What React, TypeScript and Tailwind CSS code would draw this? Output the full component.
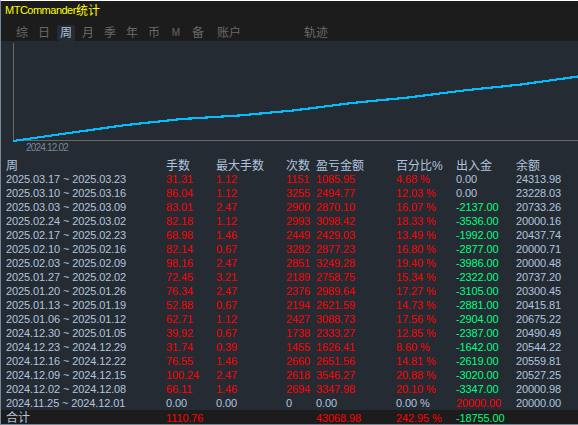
import React, { useState } from 'react';
import clsx from 'clsx';

type Week = [range: string, lots: string, maxLot: string, count: string, profit: string, percent: string, flow: string, balance: string];

const TABS = ['综', '日', '周', '月', '季', '年', '币', 'M', '备'];

const HEADERS = ['周', '手数', '最大手数', '次数', '盈亏金额', '百分比%', '出入金', '余额'];

const WEEKS: Week[] = [
    ['2025.03.17 ~ 2025.03.23', '31.31', '1.12', '1151', '1085.95', '4.68 %', '0.00', '24313.98'],
    ['2025.03.10 ~ 2025.03.16', '86.04', '1.12', '3255', '2494.77', '12.03 %', '0.00', '23228.03'],
    ['2025.03.03 ~ 2025.03.09', '83.01', '2.47', '2900', '2870.10', '16.07 %', '-2137.00', '20733.26'],
    ['2025.02.24 ~ 2025.03.02', '82.18', '1.12', '2993', '3098.42', '18.33 %', '-3536.00', '20000.16'],
    ['2025.02.17 ~ 2025.02.23', '68.98', '1.46', '2449', '2429.03', '13.49 %', '-1992.00', '20437.74'],
    ['2025.02.10 ~ 2025.02.16', '82.14', '0.67', '3282', '2877.23', '16.80 %', '-2877.00', '20000.71'],
    ['2025.02.03 ~ 2025.02.09', '98.16', '2.47', '2851', '3249.28', '19.40 %', '-3986.00', '20000.48'],
    ['2025.01.27 ~ 2025.02.02', '72.45', '3.21', '2189', '2758.75', '15.34 %', '-2322.00', '20737.20'],
    ['2025.01.20 ~ 2025.01.26', '76.34', '2.47', '2376', '2989.64', '17.27 %', '-3105.00', '20300.45'],
    ['2025.01.13 ~ 2025.01.19', '52.88', '0.67', '2194', '2621.59', '14.73 %', '-2881.00', '20415.81'],
    ['2025.01.06 ~ 2025.01.12', '62.71', '1.12', '2427', '3088.73', '17.56 %', '-2904.00', '20675.22'],
    ['2024.12.30 ~ 2025.01.05', '39.92', '0.67', '1738', '2333.27', '12.85 %', '-2387.00', '20490.49'],
    ['2024.12.23 ~ 2024.12.29', '31.74', '0.39', '1455', '1626.41', '8.60 %', '-1642.00', '20544.22'],
    ['2024.12.16 ~ 2024.12.22', '76.55', '1.46', '2660', '2651.56', '14.81 %', '-2619.00', '20559.81'],
    ['2024.12.09 ~ 2024.12.15', '100.24', '2.47', '2618', '3546.27', '20.88 %', '-3020.00', '20527.25'],
    ['2024.12.02 ~ 2024.12.08', '66.11', '1.46', '2694', '3347.98', '20.10 %', '-3347.00', '20000.98'],
    ['2024.11.25 ~ 2024.12.01', '0.00', '0.00', '0', '0.00', '0.00 %', '20000.00', '20000.00'],
];

const TOTAL = ['合计', '1110.76', '', '', '43068.98', '242.95 %', '-18755.00', ''];

const GRID = 'grid grid-cols-[160px_50px_70px_30px_80px_60px_60px_1fr] pl-[5px] whitespace-nowrap';

// Positive figures are red, negative green, zero and plain text neutral
const cellColor = (value: string, col: number) => {
    if (col === 0 || col === 7) return 'text-[#b0c4de]';
    const n = parseFloat(value);
    if (n > 0) return 'text-[#ff0000]';
    if (n < 0) return 'text-[#00ff7f]';
    return 'text-[#b0c4de]';
};

const EquityChart = () => (
    <svg width="577" height="102" viewBox="1 41 577 102" shapeRendering="crispEdges" className="block shrink-0">
        <path d="M13.5 43V141M13 140.5H578" stroke="#696969" fill="none" />
        <polyline
            points="13,141 69,133 126,125 182,119 239,115.5 295,110.3 352,103 408,97.5 465,90.3 521,84.5 578,76.5"
            stroke="#00bfff"
            strokeWidth="2.2"
            fill="none"
        />
    </svg>
);

export default function App() {
    const [tab, setTab] = useState('周');

    return (
        <div className="flex h-[425px] w-[578px] flex-col overflow-hidden border-t border-b border-l border-t-white border-b-[#778899] border-l-[#778899] bg-[#252b33] font-['Liberation_Sans','Noto_Sans_CJK_SC',sans-serif] text-[#b0c4de]">
            {/* Title and period tabs */}
            <div className="h-10 shrink-0 bg-[#1c1c1c]">
                <div className="flex h-[19px] items-center pl-1 text-[#ffff00]">
                    <span className="text-[11px] tracking-[-0.5px]">MTCommander</span>
                    <span className="text-[12px]">统计</span>
                </div>
                <div className="flex h-[21px] items-center pl-[10px] pt-1 text-[12px] text-[#696969]">
                    {TABS.map(name => (
                        <button
                            key={name}
                            onClick={() => setTab(name)}
                            className="flex w-[22px] justify-center"
                        >
                            <span
                                className={clsx(
                                    'flex h-4 w-[18px] items-center justify-center rounded-[2px]',
                                    name === tab && 'bg-[#252b33] text-[#b0c4de]',
                                    name === 'M' && 'text-[10px]'
                                )}
                            >
                                {name}
                            </span>
                        </button>
                    ))}
                    <button className="ml-2 w-[87px] text-left">账户</button>
                    <button>轨迹</button>
                </div>
            </div>

            <EquityChart />
            <div className="h-[15px] shrink-0 pl-[25px] text-[10px] leading-[10px] tracking-[-0.8px] text-[#778899]">2024.12.02</div>

            {/* Weekly table */}
            <div className={`${GRID} h-[14px] shrink-0 text-[12px] leading-[16px]`}>
                {HEADERS.map(h => <span key={h}>{h}</span>)}
            </div>
            {WEEKS.map(week => (
                <div key={week[0]} className={`${GRID} h-[14px] shrink-0 text-[11px] leading-[14px] tracking-[-0.11px]`}>
                    {week.map((value, col) => (
                        <span key={col} className={cellColor(value, col)}>{value}</span>
                    ))}
                </div>
            ))}
            <div className={`${GRID} h-[14px] shrink-0 bg-[#1c1c1c] text-[11px] leading-[16px] tracking-[-0.11px]`}>
                {TOTAL.map((value, col) => (
                    <span key={col} className={clsx(cellColor(value, col), col === 0 && 'text-[12px]')}>{value}</span>
                ))}
            </div>
        </div>
    );
}
